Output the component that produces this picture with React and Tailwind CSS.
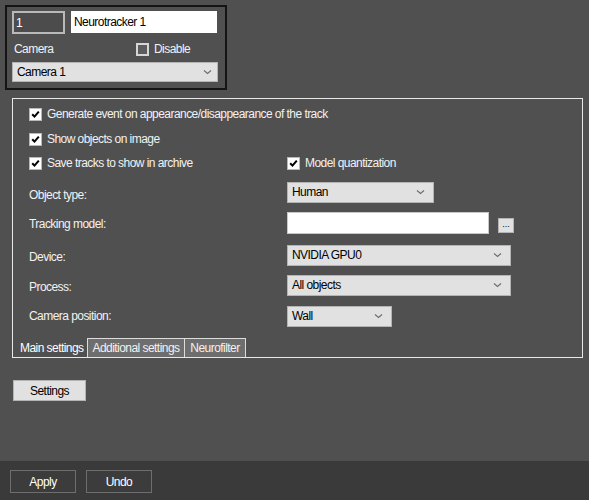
import React from "react";

const font = { fontFamily: '"Liberation Sans", Arial, sans-serif' };

function Chevron() {
  return (
    <svg width="9" height="6" viewBox="0 0 9 6" className="shrink-0">
      <path d="M1 1.5 L4.5 4.5 L8 1.5" fill="none" stroke="#6b6b6b" strokeWidth="1.1" />
    </svg>
  );
}

function Checked() {
  return (
    <span className="w-[13px] h-[13px] shrink-0 border border-[#b8b8b8] bg-white flex items-center justify-center">
      <svg width="9" height="9" viewBox="0 0 9 9">
        <path d="M1.2 4.2 L3.5 6.6 L7.8 1.6" fill="none" stroke="#000" strokeWidth="2" />
      </svg>
    </span>
  );
}

function Select({ w, text }) {
  return (
    <div
      className={`${w} h-[21px] bg-[#e1e1e1] border border-[#b4b4b4] flex items-center justify-between pl-[4px] pr-[8px] text-black`}
    >
      <span>{text}</span>
      <Chevron />
    </div>
  );
}

function CbRow({ label }) {
  return (
    <div className="flex items-center gap-[5px]">
      <Checked />
      <span>{label}</span>
    </div>
  );
}

export default function App() {
  return (
    <div
      className="w-[589px] h-[500px] bg-[#505050] flex flex-col text-[12px] tracking-[-0.55px] leading-none whitespace-nowrap text-[#f2f2f2] overflow-hidden"
      style={font}
    >
      <div className="flex-1 flex flex-col">
        {/* top box */}
        <div className="ml-[5px] mt-[5px] w-[222px] h-[85px] border-2 border-[#141414] pl-[5px] pt-[4px] flex flex-col">
          <div className="flex gap-[6px]">
            <div className="w-[53px] h-[23px] border-2 border-[#b9b9b9] bg-[#4c4c4c] flex items-center pl-[2px] text-white">
              1
            </div>
            <div className="w-[146px] h-[22px] bg-white flex items-center pl-[3px] text-black">
              Neurotracker 1
            </div>
          </div>
          <div className="mt-[4px] h-[22px] flex items-center">
            <span className="w-[124px] pl-[2px]">Camera</span>
            <span className="w-[13px] h-[13px] border-2 border-[#d6d6d6] bg-[#5c5c5c] shrink-0" />
            <span className="ml-[5px]">Disable</span>
          </div>
          <div className="mt-[2px] w-[206px] h-[20px] bg-[#e1e1e1] border border-[#b4b4b4] flex items-center justify-between pl-[4px] pr-[5px] text-black">
            <span>Camera 1</span>
            <Chevron />
          </div>
        </div>

        {/* main panel */}
        <div className="ml-[12px] mt-[8px] w-[571px] h-[260px] border border-[#e8e8e8] flex flex-col">
          <div className="pl-[16px] pt-[4px] flex flex-col">
            <div className="h-[22px] flex items-center">
              <CbRow label="Generate event on appearance/disappearance of the track" />
            </div>
            <div className="mt-[3px] h-[22px] flex items-center">
              <CbRow label="Show objects on image" />
            </div>
            <div className="mt-[2px] h-[22px] flex items-center">
              <div className="w-[258px]">
                <CbRow label="Save tracks to show in archive" />
              </div>
              <CbRow label="Model quantization" />
            </div>
            <div className="mt-[7px] h-[22px] flex items-center">
              <span className="w-[258px] pt-[6px]">Object type:</span>
              <Select w="w-[147px]" text="Human" />
            </div>
            <div className="mt-[9px] h-[22px] flex items-center">
              <span className="w-[258px] pt-[2px]">Tracking model:</span>
              <div className="w-[202px] h-[22px] bg-white border border-[#c8c8c8]" />
              <div className="ml-[9px] mt-[4px] w-[16px] h-[15px] bg-[#e1e1e1] border border-[#b4b4b4] flex items-end justify-center pb-[3px] text-black text-[9px] tracking-normal">
                ...
              </div>
            </div>
            <div className="mt-[10px] h-[22px] flex items-center">
              <span className="w-[258px] pt-[3px]">Device:</span>
              <Select w="w-[224px]" text="NVIDIA GPU0" />
            </div>
            <div className="mt-[8px] h-[22px] flex items-center">
              <span className="w-[258px] pt-[3px]">Process:</span>
              <Select w="w-[224px]" text="All objects" />
            </div>
            <div className="mt-[9px] h-[22px] flex items-center">
              <span className="w-[258px]">Camera position:</span>
              <Select w="w-[105px]" text="Wall" />
            </div>
          </div>
          <div className="mt-auto flex h-[19px]">
            <div className="w-[74px] flex items-center pl-[7px] text-white">Main settings</div>
            <div className="w-[98px] bg-[#6e6e6e] border-l border-t border-r border-[#dcdcdc] flex items-center justify-center">
              Additional settings
            </div>
            <div className="w-[61px] bg-[#6e6e6e] border-t border-r border-[#dcdcdc] flex items-center justify-center">
              Neurofilter
            </div>
          </div>
        </div>

        {/* settings button */}
        <div className="ml-[13px] mt-[22px] w-[73px] h-[21px] bg-[#e1e1e1] border border-[#b4b4b4] flex items-center justify-center text-black">
          Settings
        </div>
      </div>

      {/* bottom bar */}
      <div className="h-[39px] bg-[#3a3a3a] flex items-start pt-[9px] pl-[10px] gap-[10px]">
        <div className="w-[66px] h-[23px] border border-[#6e6e6e] bg-[#3c3c3c] flex items-center justify-center text-white">
          Apply
        </div>
        <div className="w-[66px] h-[23px] border border-[#6e6e6e] bg-[#3c3c3c] flex items-center justify-center text-white">
          Undo
        </div>
      </div>
    </div>
  );
}
